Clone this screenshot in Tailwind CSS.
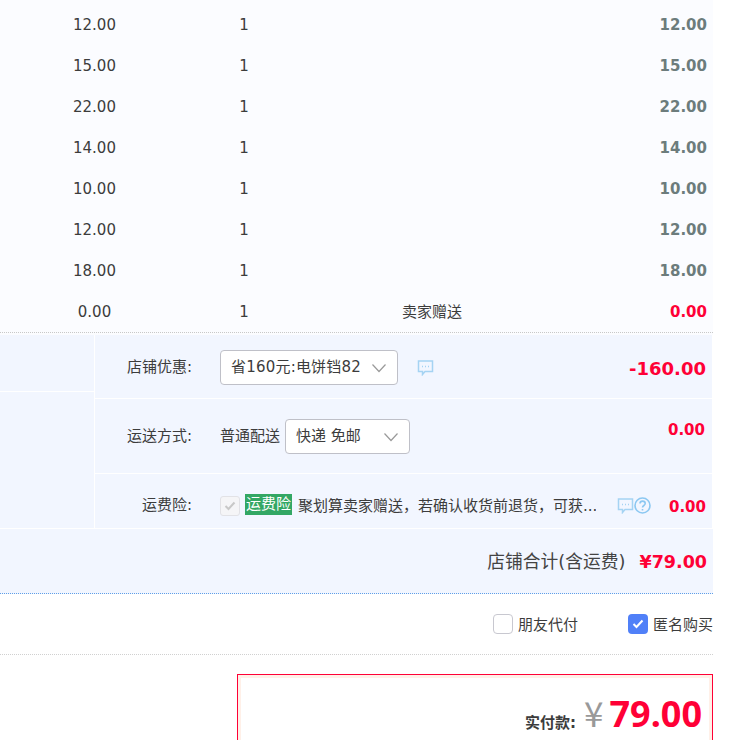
<!DOCTYPE html>
<html><head><meta charset="utf-8">
<script src="https://cdn.jsdelivr.net/npm/@tailwindcss/browser@4"></script>
</head>
<body class="bg-white overflow-hidden">
<div class="w-[713px] h-[740px] overflow-hidden text-[15px] text-[#3c3c3c] font-['DejaVu_Sans','Noto_Sans_CJK_SC',sans-serif]">
  <div class="bg-[#fbfcff] pt-[5px] h-[332px]">
    <div class="grid grid-cols-[189px_110px_266px_142px] h-[41px] items-center text-center"><span>12.00</span><span>1</span><span></span><span class="text-right font-bold text-[#6c7c7c]">12.00</span></div>
    <div class="grid grid-cols-[189px_110px_266px_142px] h-[41px] items-center text-center"><span>15.00</span><span>1</span><span></span><span class="text-right font-bold text-[#6c7c7c]">15.00</span></div>
    <div class="grid grid-cols-[189px_110px_266px_142px] h-[41px] items-center text-center"><span>22.00</span><span>1</span><span></span><span class="text-right font-bold text-[#6c7c7c]">22.00</span></div>
    <div class="grid grid-cols-[189px_110px_266px_142px] h-[41px] items-center text-center"><span>14.00</span><span>1</span><span></span><span class="text-right font-bold text-[#6c7c7c]">14.00</span></div>
    <div class="grid grid-cols-[189px_110px_266px_142px] h-[41px] items-center text-center"><span>10.00</span><span>1</span><span></span><span class="text-right font-bold text-[#6c7c7c]">10.00</span></div>
    <div class="grid grid-cols-[189px_110px_266px_142px] h-[41px] items-center text-center"><span>12.00</span><span>1</span><span></span><span class="text-right font-bold text-[#6c7c7c]">12.00</span></div>
    <div class="grid grid-cols-[189px_110px_266px_142px] h-[41px] items-center text-center"><span>18.00</span><span>1</span><span></span><span class="text-right font-bold text-[#6c7c7c]">18.00</span></div>
    <div class="grid grid-cols-[189px_110px_266px_142px] h-[36px] items-start text-center"><span class="pt-[9px]">0.00</span><span class="pt-[9px]">1</span><span class="pt-[9px]">卖家赠送</span><span class="pt-[9px] text-right font-bold text-[#ff0036]">0.00</span></div>
  </div>
  <div class="h-[3px] border-t border-dotted border-[#c8c8c8] bg-[#fbfcff]"></div>
  <div class="bg-[#f2f6ff] flex h-[194px] border-b border-r border-white">
    <div class="w-[94px] shrink-0"><div class="h-[57px] border-b border-white"></div></div>
    <div class="w-px bg-white shrink-0"></div>
    <div class="flex-1">
      <div class="h-[64px] flex border-b border-white">
        <div class="w-[97px] text-right pt-[21px] whitespace-nowrap">店铺优惠:</div>
        <div class="ml-[28px] mt-[15px] w-[178px] h-[35px] bg-white border border-[#bfc0c8] rounded-[4px] flex items-center pl-[10px] justify-between pr-[10px] whitespace-nowrap"><span class="tracking-[0.2px]">省160元:电饼铛82</span>
          <svg class="shrink-0" width="16" height="10" viewBox="0 0 16 10" fill="none" stroke="#9a9a9a" stroke-width="1.2"><path d="M1.500 1.500 8 8.500 14.500 1.500"/></svg></div>
        <svg class="ml-[19px] mt-[25px]" width="17" height="16" viewBox="0 0 17 16" fill="none" stroke="#a5d3f3" stroke-width="1.5"><path d="M1.500 1h14v10.500H8L5.500 14.500V11.500H1.500Z"/><path d="M5 6.500h1M8 6.500h1M11 6.500h1" stroke-width="1.300"/></svg>
        <div class="ml-auto pr-[6px] pt-[20px] font-bold text-[18px] text-[#ff0036]">-160.00</div>
      </div>
      <div class="h-[75px] flex border-b border-white">
        <div class="w-[97px] text-right pt-[26px] whitespace-nowrap">运送方式:</div>
        <div class="ml-[28px] pt-[26px] w-[65px] whitespace-nowrap">普通配送</div>
        <div class="mt-[20px] w-[125px] h-[35px] bg-white border border-[#bfc0c8] rounded-[4px] flex items-center pl-[10px] justify-between pr-[10px]"><span>快递 免邮</span>
          <svg width="16" height="10" viewBox="0 0 16 10" fill="none" stroke="#9a9a9a" stroke-width="1.2"><path d="M1.500 1.500 8 8.500 14.500 1.500"/></svg></div>
        <div class="ml-auto pr-[7px] pt-[20px] font-bold text-[#ff0036]">0.00</div>
      </div>
      <div class="h-[54px] flex">
        <div class="w-[97px] text-right pt-[20px] whitespace-nowrap">运费险:</div>
        <div class="ml-[28px] mt-[22px] w-[20px] h-[20px] shrink-0 bg-[#f5f5f7] border border-[#e2e2e6] rounded-[3px] flex items-center justify-center">
          <svg width="12" height="10" viewBox="0 0 12 10" fill="none" stroke="#c8c8c8" stroke-width="2"><path d="M1.500 5 4.500 8 10.500 1.500"/></svg></div>
        <div class="ml-[5px] mt-[20px] w-[47px] h-[21px] bg-[#33a764] text-white leading-[21px] text-center shrink-0 whitespace-nowrap">运费险</div>
        <div class="ml-[6px] mt-[21px] w-[298px] whitespace-nowrap overflow-hidden">聚划算卖家赠送&#xFF0C;若确认收货前退货&#xFF0C;可获...</div>
        <svg class="ml-[21px] mt-[24px] shrink-0" width="17" height="16" viewBox="0 0 17 16" fill="none" stroke="#a5d3f3" stroke-width="1.5"><path d="M1.500 1h14v10.500H8L5.500 14.500V11.500H1.500Z"/><path d="M5 6.500h1M8 6.500h1M11 6.500h1" stroke-width="1.300"/></svg>
        <svg class="mt-[23px] shrink-0" width="17" height="17" viewBox="0 0 17 17" fill="none" stroke="#8cc8f2" stroke-width="1.600"><circle cx="8.500" cy="8.500" r="7.500"/><path d="M6 6.500c0-3.200 5.200-3.200 5.200 0 0 2-2.700 2-2.700 4"/><path d="M8.500 12v1.500"/></svg>
        <div class="ml-auto pr-[6px] pt-[22px] font-bold text-[#ff0036]">0.00</div>
      </div>
    </div>
  </div>
  <div class="h-[65px] bg-[#f2f6ff] border-b border-dotted border-[#5f9fe8] flex items-center justify-end pr-[6px] pt-[2px] whitespace-nowrap">
    <span class="text-[17.750px] text-[#444]">店铺合计(含运费)</span>
    <span class="ml-[14px] font-bold text-[17.500px] text-[#ff0036]">¥79.00</span>
  </div>
  <div class="h-[61px] border-b border-dotted border-[#d0d0d0] flex items-center justify-end whitespace-nowrap">
    <span class="w-[20px] h-[20px] bg-white border border-[#c8c8d0] rounded-[4px]"></span>
    <span class="ml-[5px] mr-[50px] pt-[3px]">朋友代付</span>
    <span class="w-[20px] h-[20px] bg-[#5080f8] rounded-[4px] flex items-center justify-center"><svg width="12" height="10" viewBox="0 0 12 10" fill="none" stroke="#fff" stroke-width="2"><path d="M1.500 5 4.500 8 10.500 1.500"/></svg></span>
    <span class="ml-[5px] pt-[3px]">匿名购买</span>
  </div>
  <div class="pl-[237px] pt-[19px]">
    <div class="h-[100px] border border-[#ff0036] bg-white">
      <div class="h-full border-[3px] border-[#fff0e8] flex justify-end items-start pr-[7px] pt-[18px] whitespace-nowrap">
        <span class="font-bold text-[15px] text-[#3c3c3c] mt-[16px]">实付款:</span>
        <span class="ml-[8px] text-[35px] leading-[36px] -mt-[2px] text-[#999] font-['Noto_Sans_CJK_SC']">¥</span>
        <span class="ml-[6px] text-[36px] leading-[36px] font-bold text-[#ff0036] font-['Noto_Sans',sans-serif]">79.00</span>
      </div>
    </div>
  </div>
</div>
</body></html>
